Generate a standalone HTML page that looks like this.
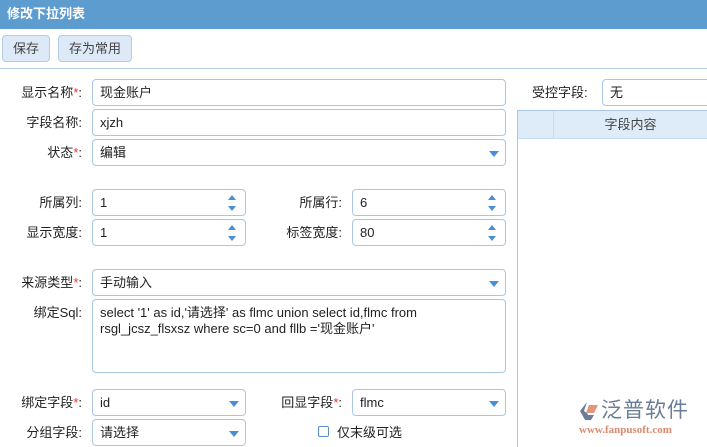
<!DOCTYPE html><html><head><meta charset="utf-8"><style>
body{margin:0;width:707px;height:447px;overflow:hidden;background:#fff;font-family:"Liberation Sans","Noto Sans CJK SC",sans-serif;font-size:13px;color:#222;position:relative}
.a{position:absolute}
.hd{left:0;top:0;width:707px;height:29px;background:#5d9ccf;color:#fff;font-weight:bold;font-size:13px;line-height:27px;padding-left:7px;box-sizing:border-box}
.btn{top:35px;height:27px;background:#dde9f6;border:1px solid #b3cde6;border-radius:4px;box-sizing:border-box;line-height:25px;text-align:center;color:#444}
.in{height:27px;border:1px solid #a9c7e4;border-radius:4px;box-sizing:border-box;padding-left:7px;line-height:25px;background:#fff}
.lb{text-align:right;line-height:27px;width:80px}
.r{color:#e33}
.dd::after{content:"";position:absolute;right:6px;top:11px;border-left:5px solid transparent;border-right:5px solid transparent;border-top:6px solid #4a8fd6}
.sp::before{content:"";position:absolute;right:9px;top:5px;border-left:4px solid transparent;border-right:4px solid transparent;border-bottom:5px solid #4a8fd6}
.sp::after{content:"";position:absolute;right:9px;top:16px;border-left:4px solid transparent;border-right:4px solid transparent;border-top:5px solid #4a8fd6}
</style></head><body>
<div class="a hd">修改下拉列表</div>
<div class="a btn" style="left:2px;width:48px">保存</div>
<div class="a btn" style="left:58px;width:74px">存为常用</div>
<div class="a" style="left:0;top:68px;width:707px;height:1px;background:#b3cde6"></div>

<div class="a lb" style="left:2px;top:79px">显示名称<span class="r">*</span>:</div>
<div class="a in" style="left:92px;top:79px;width:414px">现金账户</div>
<div class="a lb" style="left:2px;top:109px">字段名称:</div>
<div class="a in" style="left:92px;top:109px;width:414px">xjzh</div>
<div class="a lb" style="left:2px;top:139px">状态<span class="r">*</span>:</div>
<div class="a in dd" style="left:92px;top:139px;width:414px">编辑</div>

<div class="a lb" style="left:2px;top:189px">所属列:</div>
<div class="a in sp" style="left:92px;top:189px;width:154px">1</div>
<div class="a lb" style="left:262px;top:189px">所属行:</div>
<div class="a in sp" style="left:352px;top:189px;width:154px">6</div>
<div class="a lb" style="left:2px;top:219px">显示宽度:</div>
<div class="a in sp" style="left:92px;top:219px;width:154px">1</div>
<div class="a lb" style="left:262px;top:219px">标签宽度:</div>
<div class="a in sp" style="left:352px;top:219px;width:154px">80</div>

<div class="a lb" style="left:2px;top:269px">来源类型<span class="r">*</span>:</div>
<div class="a in dd" style="left:92px;top:269px;width:414px">手动输入</div>
<div class="a lb" style="left:2px;top:299px">绑定Sql:</div>
<div class="a in" style="left:92px;top:299px;width:414px;height:74px;line-height:16px;padding-top:5px">select '1' as id,'请选择' as flmc union select id,flmc from rsgl_jcsz_flsxsz where sc=0 and fllb ='现金账户'</div>

<div class="a lb" style="left:2px;top:389px">绑定字段<span class="r">*</span>:</div>
<div class="a in dd" style="left:92px;top:389px;width:154px">id</div>
<div class="a lb" style="left:262px;top:389px">回显字段<span class="r">*</span>:</div>
<div class="a in dd" style="left:352px;top:389px;width:154px">flmc</div>
<div class="a lb" style="left:2px;top:419px">分组字段:</div>
<div class="a in dd" style="left:92px;top:419px;width:154px">请选择</div>
<div class="a" style="left:318px;top:426px;width:11px;height:11px;border:1px solid #5a8fc6;border-radius:2px;box-sizing:border-box"></div>
<div class="a" style="left:337px;top:419px;line-height:27px">仅末级可选</div>

<div class="a" style="left:532px;top:79px;line-height:27px">受控字段:</div>
<div class="a in" style="left:602px;top:79px;width:110px">无</div>
<div class="a" style="left:517px;top:110px;width:190px;height:337px;border-top:1px solid #a9c7e4;border-left:1px solid #a9c7e4;box-sizing:border-box;background:#fff"></div>
<div class="a" style="left:518px;top:111px;width:189px;height:27px;background:#deebf8;border-bottom:1px solid #c8dcef"></div>
<div class="a" style="left:553px;top:111px;width:1px;height:27px;background:#c8dcef"></div>
<div class="a" style="left:554px;top:111px;width:153px;text-align:center;line-height:27px;color:#444">字段内容</div>

<svg class="a" style="left:578px;top:401px" width="22" height="20" viewBox="0 0 22 20"><path d="M9 1 L2 10 L7 19 L10 13 L6 10 Z" fill="#6b7d96"/><path d="M11 4 L20 4 L16 12 L8 12 Z" fill="#e0967a"/><path d="M9 14 L16 14 L13 19 L7 19 Z" fill="#6b7d96"/></svg>
<div class="a" style="left:601px;top:398px;font-size:21px;color:#6b7d96;letter-spacing:1px;line-height:26px">泛普软件</div>
<div class="a" style="left:579px;top:424px;font-size:11px;color:#d98a6e;font-family:'Liberation Serif',serif;font-weight:bold">www.fanpusoft.com</div>
</body></html>
